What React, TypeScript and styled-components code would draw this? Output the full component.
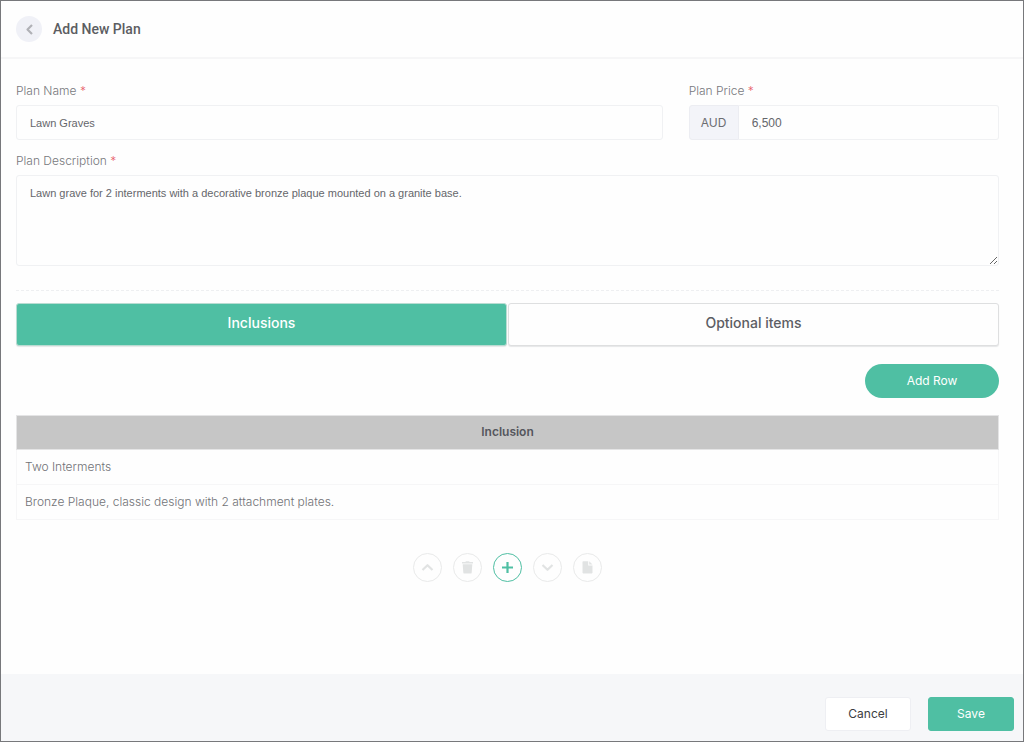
import React, { useState } from "react";
import styled, { createGlobalStyle, css } from "styled-components";

const green = "#4fbfa3";
const line = "#f0f1f3";

const GlobalStyle = createGlobalStyle`
  *, *::before, *::after { box-sizing: border-box; }
  body {
    margin: 0;
    background: #fefefe;
    color: #646c9a;
    font-family: Inter, "Noto Sans", sans-serif;
    font-size: 12px;
    line-height: 18px;
  }
  button, input, textarea { font: inherit; }
  button { cursor: pointer; }
`;

const Page = styled.div`
  display: flex;
  flex-direction: column;
  min-height: 100vh;
  border: 1px solid #77787b;
`;

const Header = styled.header`
  display: flex;
  align-items: center;
  gap: 11px;
  height: 58px;
  padding: 0 15px;
  border-bottom: 2px solid #f6f6f7;
`;

const BackButton = styled.button`
  display: grid;
  place-items: center;
  width: 26px;
  height: 26px;
  padding: 0;
  border: 0;
  border-radius: 50%;
  background: #f0f1f7;
  color: #b0b1b6;
`;

const Title = styled.h1`
  margin: 0;
  color: #5c5d62;
  font-family: Roboto, sans-serif;
  font-size: 14px;
  font-weight: 500;
`;

const Content = styled.main`
  padding: 23px 24px 24px 15px;
`;

const Fields = styled.div`
  display: grid;
  grid-template-columns: repeat(12, 1fr);
  gap: 12px 26px;
`;

const Field = styled.div<{ $span: number }>`
  display: flex;
  flex-direction: column;
  gap: 5px;
  grid-column: span ${(p) => p.$span};
  min-width: 0;
`;

const Label = styled.label`
  color: #77787c;
  font-weight: 300;
`;

const Required = styled.span`
  color: #e8606a;
`;

const control = css`
  width: 100%;
  min-width: 0;
  border: 1px solid ${line};
  border-radius: 3px;
  outline: 0;
  background: #fefefe;
  color: #65666b;
  font-family: "Liberation Sans", Arial, sans-serif;
  font-size: 11px;
`;

const TextInput = styled.input`
  ${control}
  height: 35px;
  padding: 0 13px;
`;

const TextArea = styled.textarea`
  ${control}
  display: block;
  height: 91px;
  padding: 8px 13px;
  resize: vertical;
`;

const PriceGroup = styled.div`
  display: flex;

  ${TextInput} {
    border-left: 0;
    border-radius: 0 3px 3px 0;
    font-size: 12px;
  }
`;

const Currency = styled.span`
  display: grid;
  place-items: center;
  flex: 0 0 50px;
  border: 1px solid #ecedf2;
  border-radius: 3px 0 0 3px;
  background: #f3f4f9;
  color: #6c6d72;
`;

const Divider = styled.hr`
  margin: 24px 0 12px;
  border: 0;
  border-top: 1px dashed #eeeff1;
`;

const Tabs = styled.div`
  display: flex;
  gap: 1px;
`;

const Tab = styled.button<{ $active: boolean }>`
  flex: 1;
  height: 43px;
  padding: 0 12px 3px;
  border: 1px solid ${(p) => (p.$active ? "#b9dcd2" : "#dedfe0")};
  border-radius: 3px;
  background: ${(p) => (p.$active ? green : "#fefefe")};
  box-shadow: 0 1px 1px #e6e7e8;
  color: ${(p) => (p.$active ? "#fff" : "#5c5d63")};
  font-size: 14px;
  font-weight: 500;
`;

const TableActions = styled.div`
  display: flex;
  justify-content: flex-end;
  margin: 18px 0 17px;
`;

const AddRowButton = styled.button`
  width: 134px;
  height: 34px;
  border: 0;
  border-radius: 17px;
  background: ${green};
  color: #fff;
`;

const Table = styled.table`
  width: 100%;
  border-collapse: collapse;
`;

const HeadCell = styled.th`
  height: 34px;
  padding: 0 9px 2px;
  border: 1px solid #e4e4e5;
  background: #c6c6c6;
  color: #55565d;
  font-weight: 600;
`;

const Cell = styled.td`
  height: 35px;
  padding: 0 8px;
  border: 1px solid #f6f6f7;
  color: #717276;
  font-weight: 300;
`;

const RowTools = styled.div`
  display: flex;
  justify-content: center;
  gap: 11px;
  margin-top: 33px;
`;

const RoundButton = styled.button<{ $primary?: boolean }>`
  display: grid;
  place-items: center;
  width: 29px;
  height: 29px;
  padding: 0;
  border: 1px solid ${(p) => (p.$primary ? green : "#e9eaea")};
  border-radius: 50%;
  background: #fefefe;
  color: ${(p) => (p.$primary ? green : "#e1e3e3")};
`;

const Footer = styled.footer`
  display: flex;
  justify-content: flex-end;
  gap: 17px;
  margin-top: auto;
  padding: 23px 9px 10px;
  background: #f6f7f9;
`;

const FooterButton = styled.button<{ $primary?: boolean }>`
  width: 86px;
  height: 34px;
  padding: 0;
  border: 1px solid ${(p) => (p.$primary ? green : "#eeeff3")};
  border-radius: 3px;
  background: ${(p) => (p.$primary ? green : "#fff")};
  color: ${(p) => (p.$primary ? "#fff" : "#3c3d42")};
`;

const LineIcon = ({ d }: { d: string }) => (
  <svg width="15" height="15" viewBox="0 0 15 15" fill="none" stroke="currentColor" strokeWidth="2.2" strokeLinejoin="round" aria-hidden="true">
    <path d={d} />
  </svg>
);

const TrashIcon = () => (
  <svg width="15" height="15" viewBox="0 0 15 15" fill="currentColor" aria-hidden="true">
    <path d="M2 1.900h3.300L6 1.200h3l.7.7H13v1.500H2zM2.700 4.200h9.600l-.6 8.200a1.300 1.300 0 0 1-1.300 1.200H4.600a1.300 1.300 0 0 1-1.300-1.200z" />
  </svg>
);

const FileIcon = () => (
  <svg width="15" height="15" viewBox="0 0 15 15" fill="currentColor" aria-hidden="true">
    <path d="M3.300 1.300h4.900v4.300h4.300v7a.8.800 0 0 1-.8.800H3.300a.8.800 0 0 1-.8-.8V2.100a.8.800 0 0 1 .8-.8zM9.200 1.300l3.300 3.300H9.200z" />
  </svg>
);

const tabNames = ["Inclusions", "Optional items"];
const inclusions = ["Two Interments", "Bronze Plaque, classic design with 2 attachment plates."];

export default function App() {
  const [tab, setTab] = useState(0);

  return (
    <>
      <GlobalStyle />
      <Page>
        <Header>
          <BackButton aria-label="Back">
            <LineIcon d="M10 3 5.500 7.500 10 12" />
          </BackButton>
          <Title>Add New Plan</Title>
        </Header>

        <Content>
          <Fields>
            <Field $span={8}>
              <Label htmlFor="plan-name">Plan Name <Required>*</Required></Label>
              <TextInput id="plan-name" defaultValue="Lawn Graves" />
            </Field>
            <Field $span={4}>
              <Label htmlFor="plan-price">Plan Price <Required>*</Required></Label>
              <PriceGroup>
                <Currency>AUD</Currency>
                <TextInput id="plan-price" defaultValue="6,500" />
              </PriceGroup>
            </Field>
            <Field $span={12}>
              <Label htmlFor="plan-description">Plan Description <Required>*</Required></Label>
              <TextArea
                id="plan-description"
                defaultValue="Lawn grave for 2 interments with a decorative bronze plaque mounted on a granite base."
              />
            </Field>
          </Fields>

          <Divider />

          <Tabs role="tablist">
            {tabNames.map((name, i) => (
              <Tab key={name} role="tab" aria-selected={tab === i} $active={tab === i} onClick={() => setTab(i)}>
                {name}
              </Tab>
            ))}
          </Tabs>

          <TableActions>
            <AddRowButton>Add Row</AddRowButton>
          </TableActions>

          <Table>
            <thead>
              <tr>
                <HeadCell scope="col">Inclusion</HeadCell>
              </tr>
            </thead>
            <tbody>
              {inclusions.map((text) => (
                <tr key={text}>
                  <Cell>{text}</Cell>
                </tr>
              ))}
            </tbody>
          </Table>

          <RowTools>
            <RoundButton aria-label="Move up">
              <LineIcon d="M2.500 10l5-4.800 5 4.800" />
            </RoundButton>
            <RoundButton aria-label="Delete row">
              <TrashIcon />
            </RoundButton>
            <RoundButton $primary aria-label="Insert row">
              <LineIcon d="M7.500 2v11M2 7.500h11" />
            </RoundButton>
            <RoundButton aria-label="Move down">
              <LineIcon d="M2.500 5l5 4.800 5-4.800" />
            </RoundButton>
            <RoundButton aria-label="Copy row">
              <FileIcon />
            </RoundButton>
          </RowTools>
        </Content>

        <Footer>
          <FooterButton>Cancel</FooterButton>
          <FooterButton $primary>Save</FooterButton>
        </Footer>
      </Page>
    </>
  );
}
